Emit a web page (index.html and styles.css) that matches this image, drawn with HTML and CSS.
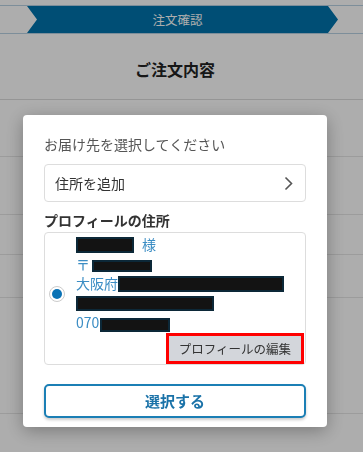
FILE: index.html
```html
<!DOCTYPE html>
<html lang="ja">
<head>
  <meta charset="UTF-8" />
  <meta name="viewport" content="width=device-width, initial-scale=1.0" />
  <title>注文確認</title>
  <link rel="stylesheet" href="styles.css">
</head>
<body>
  <div class="steps">
    <div class="step-current">注文確認</div>
  </div>

  <h1 class="page-title">ご注文内容</h1>

  <div class="order-list">
    <div class="order-row row-a"></div>
    <div class="order-row row-b"></div>
    <div class="order-row row-c"></div>
    <div class="order-row row-d"></div>
    <div class="order-row row-e"></div>
  </div>

  <div class="overlay">
    <div class="modal">
      <p class="modal-lead">お届け先を選択してください</p>

      <button class="add-address">
        <span>住所を追加</span>
        <svg class="chevron" width="9" height="15" viewBox="0 0 9 15">
          <polyline points="1.5,1.5 7.5,7.5 1.5,13.5" fill="none" stroke="#555" stroke-width="1.6" />
        </svg>
      </button>

      <h2 class="section-title">プロフィールの住所</h2>

      <div class="address-card">
        <div class="address-body">
          <span class="radio"><span class="radio-dot"></span></span>
          <div class="address-lines">
            <div class="line"><span class="redact r-name"></span>様</div>
            <div class="line">〒<span class="redact r-zip"></span></div>
            <div class="line">大阪府<span class="redact r-city"></span></div>
            <div class="line"><span class="redact r-street"></span></div>
            <div class="line">070<span class="redact r-tel"></span></div>
          </div>
        </div>
        <div class="address-actions">
          <button class="edit-profile">プロフィールの編集</button>
        </div>
      </div>

      <button class="select-btn">選択する</button>
    </div>
  </div>
</body>
</html>
```

FILE: styles.css
```css
body {
  margin: 0;
  background: #fff;
  color: #333;
  font-family: "Noto Sans CJK JP", "Noto Sans", sans-serif;
}

button {
  font-family: inherit;
  cursor: pointer;
}

/* step bar */
.steps {
  margin-top: 5px;
  border-top: 1px solid #b8d2e4;
  border-bottom: 1px solid #b8d2e4;
  height: 27px;
  padding: 0 25px 0 27px;
}

.step-current {
  height: 27px;
  padding-right: 10px;
  background: #0074ad;
  color: #fff;
  font-size: 12.5px;
  line-height: 27px;
  text-align: center;
  clip-path: polygon(0 0, calc(100% - 10px) 0, 100% 50%, calc(100% - 10px) 100%, 0 100%, 10px 50%);
}

.page-title {
  margin: 0;
  height: 65px;
  padding-right: 13px;
  line-height: 70px;
  text-align: center;
  font-size: 16px;
  font-weight: bold;
  color: #222;
  border-bottom: 1px solid #dcdcdc;
}

.order-row {
  border-bottom: 1px solid #e6e6e6;
}

.row-a { height: 56px; }
.row-b { height: 57px; }
.row-c { height: 39px; }
.row-d { height: 42px; }
.row-e { height: 115px; }

/* modal */
.overlay {
  position: fixed;
  inset: 0;
  background: rgba(0, 0, 0, 0.32);
  display: flex;
  justify-content: center;
  align-items: flex-start;
  padding: 115px 13px 0 0;
}

.modal {
  width: 262px;
  background: #fff;
  border-radius: 4px;
  padding: 19px 21px 9px;
  box-shadow: 0 4px 18px rgba(0, 0, 0, 0.3);
}

.modal-lead {
  margin: 0 0 10px;
  font-size: 14px;
  line-height: 20px;
  color: #555;
}

.add-address {
  display: flex;
  align-items: center;
  justify-content: space-between;
  width: 100%;
  height: 38px;
  padding: 0 12px 0 10px;
  background: #fff;
  border: 1px solid #ddd;
  border-radius: 4px;
  font-size: 14px;
  color: #333;
}

.section-title {
  margin: 8px 0 2px;
  font-size: 14px;
  line-height: 20px;
  font-weight: bold;
  color: #333;
}

.address-card {
  border: 1px solid #ddd;
  border-radius: 4px;
}

.address-body {
  display: flex;
  align-items: center;
  padding: 2px 0 0 4px;
}

.radio {
  width: 14px;
  height: 14px;
  border: 1px solid #ccc;
  border-radius: 50%;
  display: flex;
  align-items: center;
  justify-content: center;
  margin-right: 11px;
  margin-top: 20px;
}

.radio-dot {
  width: 10px;
  height: 10px;
  border-radius: 50%;
  background: #0a72b5;
}

.address-lines {
  color: #3b8dc4;
  font-size: 14px;
}

.line {
  height: 19.6px;
  line-height: 19.6px;
  display: flex;
  align-items: center;
  white-space: nowrap;
}

.redact {
  display: inline-block;
  background: #131313;
  border: 2px solid #0c2838;
  box-sizing: border-box;
}

.r-name { width: 58px; height: 16px; margin-right: 8px; }
.r-zip { width: 60px; height: 12px; margin-left: 2px; margin-top: 4px; }
.r-city { width: 166px; height: 16px; }
.r-street { width: 138px; height: 15px; }
.r-tel { width: 70px; height: 14px; margin-left: 1px; margin-top: 3px; }

.address-actions {
  display: flex;
  justify-content: flex-end;
  padding-right: 1px;
}

.edit-profile {
  width: 138px;
  height: 31px;
  padding: 0;
  background: #d3d6db;
  border: 3px solid #f00;
  font-size: 12.5px;
  color: #333;
}

.select-btn {
  display: block;
  width: 100%;
  height: 34px;
  margin-top: 19px;
  background: #fff;
  border: 2px solid #1b7fb5;
  border-radius: 5px;
  box-shadow: 0 2px 3px rgba(0, 0, 0, 0.2);
  font-size: 15px;
  font-weight: bold;
  color: #1a72a8;
}
```
